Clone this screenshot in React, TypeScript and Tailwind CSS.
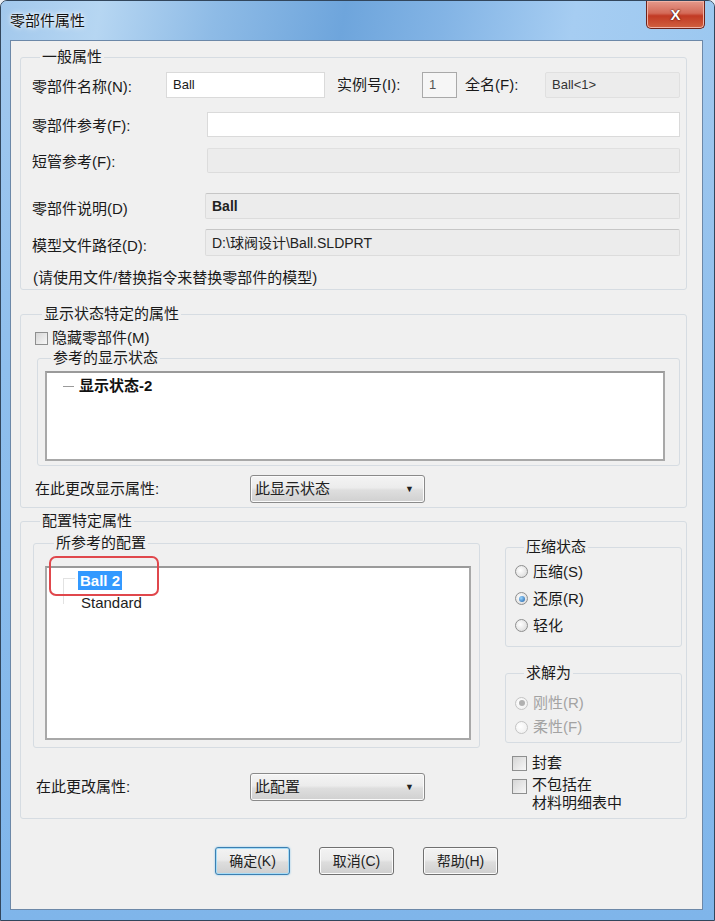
import React from "react";

function Radio({ checked = false, disabled = false }: { checked?: boolean; disabled?: boolean }) {
  return (
    <span
      className={
        "flex h-[13px] w-[13px] shrink-0 items-center justify-center rounded-full border " +
        (disabled
          ? "border-[#c4c4c4] bg-[radial-gradient(circle_at_40%_40%,#ffffff,#ececec)]"
          : "border-[#8e8f8f] bg-[radial-gradient(circle_at_40%_40%,#ffffff,#d4d4d4)]")
      }
    >
      {checked && (
        <span
          className={
            "h-[6px] w-[6px] rounded-full " +
            (disabled
              ? "bg-[#b0b0b0]"
              : "bg-[radial-gradient(circle_at_35%_35%,#9ad6ff,#1a5ca6)]")
          }
        />
      )}
    </span>
  );
}

function Check({ size = 13 }: { size?: number }) {
  return (
    <span
      className={
        "block shrink-0 border border-[#8e8f8f] bg-[linear-gradient(135deg,#d6d6d6,#f7f7f7)] " +
        (size === 13 ? "h-[13px] w-[13px]" : "h-[15px] w-[15px]")
      }
    />
  );
}

function Combo({ text }: { text: string }) {
  return (
    <div className="flex h-[28px] w-[175px] items-center justify-between rounded-[3px] border border-[#8a8a8a] bg-[linear-gradient(180deg,#f4f4f4,#ececec_45%,#dedede_55%,#d0d0d0)] pl-[4px] pr-[10px] shadow-[inset_0_0_0_1px_#fbfbfb]">
      <span className="text-[15px] leading-[20px] text-[#222]">{text}</span>
      <span className="text-[9px] leading-[10px] text-[#222]">▼</span>
    </div>
  );
}

function Btn({ text, def = false }: { text: string; def?: boolean }) {
  return (
    <div
      className={
        "flex h-[28px] w-[75px] items-center justify-center rounded-[3px] border bg-[linear-gradient(180deg,#f3f3f3,#ebebeb_45%,#dddddd_55%,#cfcfcf)] text-[14px] leading-[18px] text-[#222] " +
        (def
          ? "border-[#3c7fb1] shadow-[inset_0_0_0_1px_#a6dcf7,0_0_2px_#7ec3ea]"
          : "border-[#707070] shadow-[inset_0_0_0_1px_#fbfbfb]")
      }
    >
      {text}
    </div>
  );
}

export default function App() {
  const fieldWhite = "h-full border border-[#dadada] bg-white";
  const fieldGray =
    "h-full rounded-[2px] border border-[#dcdcdc] border-t-[#c6c6c6] bg-[#ececec] flex items-center pl-[6px] text-[14px] leading-[18px] text-[#222]";
  return (
    <div className="h-[921px] w-[715px] bg-[#e9eef3] font-['Liberation_Sans','Noto_Sans_CJK_SC',sans-serif] text-[#1a1a1a]">
      <div className="flex h-[921px] w-[715px] flex-col rounded-t-[7px] border border-[#32465c] bg-[linear-gradient(180deg,#a3c9ee,#8fbfed_40%,#7fb5ea)]">
        {/* title bar */}
        <div className="flex h-[39px] shrink-0 items-start justify-between rounded-t-[6px] bg-[linear-gradient(100deg,#a2c8ec_0%,#b6d6f2_14%,#8ebbe6_30%,#6ea5dc_48%,#83b4e5_62%,#a6cdf2_80%,#9cc8f0_100%)]">
          <div className="pl-[9px] pt-[10px] text-[15px] leading-[20px] text-[#111] [text-shadow:0_0_6px_#ffffff,0_0_3px_#ffffff]">
            零部件属性
          </div>
          <div className="mr-[9px] flex h-[28px] w-[59px] items-center justify-center rounded-b-[5px] border border-t-0 border-[#6d231b] bg-[linear-gradient(180deg,#e59a8c,#d46a58_45%,#c23a24_55%,#d0603f)] shadow-[inset_0_0_0_1px_#f2b3a6]">
            <span className="text-[15px] font-bold leading-[16px] text-white [text-shadow:0_0_2px_#4a120a,0_0_1px_#4a120a]">X</span>
          </div>
        </div>

        {/* client */}
        <div className="ml-[9px] mr-[11px] h-[870px] border border-[#6c88a8] bg-[#f0f0f0] pl-[9px] pr-[15px] pt-[6px]">
          {/* group 1 */}
          <fieldset className="rounded-[3px] border border-[#d6dce2] pb-[1px] pl-[11px] pr-[6px]">
            <legend className="ml-[8px] px-[2px] text-[15px] leading-[20px]">一般属性</legend>
            <div className="mt-[5px] flex h-[26px] items-center">
              <div className="w-[134px] pt-[4px] text-[15px] leading-[20px]">零部件名称(N):</div>
              <div className={fieldWhite + " w-[159px] flex items-center pl-[6px] text-[13px] leading-[18px]"}>Ball</div>
              <div className="ml-[12px] w-[85px] text-[15px] leading-[20px]">实例号(I):</div>
              <div className="flex h-full w-[35px] items-center border border-[#a9a9a9] bg-[#f6f6f6] pl-[6px] text-[13px] text-[#555]">1</div>
              <div className="ml-[8px] w-[80px] text-[15px] leading-[20px]">全名(F):</div>
              <div className="flex h-full w-[135px] items-center rounded-[2px] border border-[#e0e0e0] bg-[#ececec] pl-[6px] text-[13px] leading-[18px] text-[#333]">Ball&lt;1&gt;</div>
            </div>
            <div className="mt-[14px] flex h-[25px] items-center">
              <div className="w-[175px] pt-[2px] text-[15px] leading-[20px]">零部件参考(F):</div>
              <div className={fieldWhite + " flex-1"} />
            </div>
            <div className="mt-[11px] flex h-[25px] items-center">
              <div className="w-[175px] pt-[2px] text-[15px] leading-[20px]">短管参考(F):</div>
              <div className={fieldGray + " flex-1 border-t-[#e0e0e0]"} />
            </div>
            <div className="mt-[20px] flex h-[26px] items-center">
              <div className="w-[173px] pt-[5px] text-[15px] leading-[20px]">零部件说明(D)</div>
              <div className={fieldGray + " flex-1 font-semibold"}>Ball</div>
            </div>
            <div className="mt-[10px] flex h-[27px] items-center">
              <div className="w-[173px] pt-[6px] text-[15px] leading-[20px]">模型文件路径(D):</div>
              <div className={fieldGray + " flex-1"}>D:\球阀设计\Ball.SLDPRT</div>
            </div>
            <div className="ml-[1px] mt-[12px] text-[15px] leading-[20px]">(请使用文件/替换指令来替换零部件的模型)</div>
          </fieldset>

          {/* group 2 */}
          <fieldset className="mt-[14px] rounded-[3px] border border-[#d6dce2] pb-[4px] pl-[14px] pr-[6px]">
            <legend className="ml-[7px] px-[2px] text-[15px] leading-[20px]">显示状态特定的属性</legend>
            <div className="mt-[4px] flex h-[20px] items-center gap-[4px]">
              <Check />
              <span className="text-[15px] leading-[20px]">隐藏零部件(M)</span>
            </div>
            <fieldset className="ml-[2px] rounded-[3px] border border-[#d6dce2] pb-[4px] pl-[7px] pr-[14px]">
              <legend className="ml-[6px] px-[2px] text-[15px] leading-[20px]">参考的显示状态</legend>
              <div className="mt-[3px] h-[90px] border-2 border-[#a8a8a8] border-t-[#9a9a9a] bg-white">
                <div className="mt-[3px] flex h-[20px] items-center gap-[5px] pl-[16px]">
                  <span className="h-[1px] w-[11px] bg-[#9a9a9a]" />
                  <span className="text-[15px] font-bold leading-[20px] text-[#111]">显示状态-2</span>
                </div>
              </div>
            </fieldset>
            <div className="mt-[9px] flex h-[28px] items-center">
              <div className="w-[215px] text-[15px] leading-[20px]">在此更改显示属性:</div>
              <Combo text="此显示状态" />
            </div>
          </fieldset>

          {/* group 3 */}
          <fieldset className="mt-[3px] rounded-[3px] border border-[#d6dce2] pb-[6px] pl-[12px] pr-[4px]">
            <legend className="ml-[7px] px-[2px] text-[15px] leading-[20px]">配置特定属性</legend>
            <div className="flex items-start">
              {/* left column */}
              <div className="w-[447px]">
                <fieldset className="mt-[2px] rounded-[3px] border border-[#d6dce2] pb-[7px] pl-[11px] pr-[8px]">
                  <legend className="ml-[9px] px-[2px] text-[15px] leading-[20px]">所参考的配置</legend>
                  <div className="relative mt-[13px] h-[174px] border-2 border-[#a8a8a8] border-t-[#9a9a9a] bg-white">
                    <span className="absolute left-[16px] top-[10px] h-[26px] w-[12px] border-l border-t border-[#e2e2e2]" />
                    <div className="mt-[1px] flex h-[22px] items-center pl-[31px]">
                      <span className="bg-[#3399ff] px-[2px] text-[15px] font-bold leading-[19px] text-white">Ball 2</span>
                    </div>
                    <div className="flex h-[22px] items-center pl-[34px]">
                      <span className="text-[15px] font-medium leading-[19px] text-[#222]">Standard</span>
                    </div>
                    <span className="absolute left-[2px] top-[-12px] h-[40px] w-[110px] rounded-[7px] border-2 border-[#e0474c]" />
                  </div>
                </fieldset>
                <div className="mt-[25px] flex h-[28px] items-center pl-[3px]">
                  <div className="w-[214px] text-[15px] leading-[20px]">在此更改属性:</div>
                  <Combo text="此配置" />
                </div>
              </div>

              {/* right column */}
              <div className="ml-[25px] w-[177px]">
                <fieldset className="mt-[6px] rounded-[3px] border border-[#d6dce2] pb-[7px] pl-[9px]">
                  <legend className="ml-[9px] px-[2px] text-[15px] leading-[20px]">压缩状态</legend>
                  <div className="mt-[1px] flex h-[27px] items-center gap-[5px]">
                    <Radio />
                    <span className="text-[15px] leading-[20px]">压缩(S)</span>
                  </div>
                  <div className="flex h-[27px] items-center gap-[5px]">
                    <Radio checked />
                    <span className="text-[15px] leading-[20px]">还原(R)</span>
                  </div>
                  <div className="flex h-[27px] items-center gap-[5px]">
                    <Radio />
                    <span className="text-[15px] leading-[20px]">轻化</span>
                  </div>
                </fieldset>
                <fieldset className="mt-[16px] rounded-[3px] border border-[#d6dce2] pb-[3px] pl-[9px]">
                  <legend className="ml-[9px] px-[2px] text-[15px] leading-[20px]">求解为</legend>
                  <div className="mt-[8px] flex h-[24px] items-center gap-[5px]">
                    <Radio checked disabled />
                    <span className="text-[15px] leading-[20px] text-[#a3a3a3]">刚性(R)</span>
                  </div>
                  <div className="flex h-[24px] items-center gap-[5px]">
                    <Radio disabled />
                    <span className="text-[15px] leading-[20px] text-[#a3a3a3]">柔性(F)</span>
                  </div>
                </fieldset>
                <div className="mt-[10px] flex h-[20px] items-center gap-[5px] pl-[7px]">
                  <Check size={15} />
                  <span className="text-[15px] leading-[20px]">封套</span>
                </div>
                <div className="mt-[3px] flex items-start gap-[5px] pl-[7px]">
                  <span className="mt-[3px] block">
                    <Check size={15} />
                  </span>
                  <span className="text-[15px] leading-[18px]">
                    不包括在
                    <br />
                    材料明细表中
                  </span>
                </div>
              </div>
            </div>
          </fieldset>

          {/* buttons */}
          <div className="mt-[28px] flex justify-center gap-[29px] pl-[6px]">
            <Btn text="确定(K)" def />
            <Btn text="取消(C)" />
            <Btn text="帮助(H)" />
          </div>
        </div>
      </div>
    </div>
  );
}
